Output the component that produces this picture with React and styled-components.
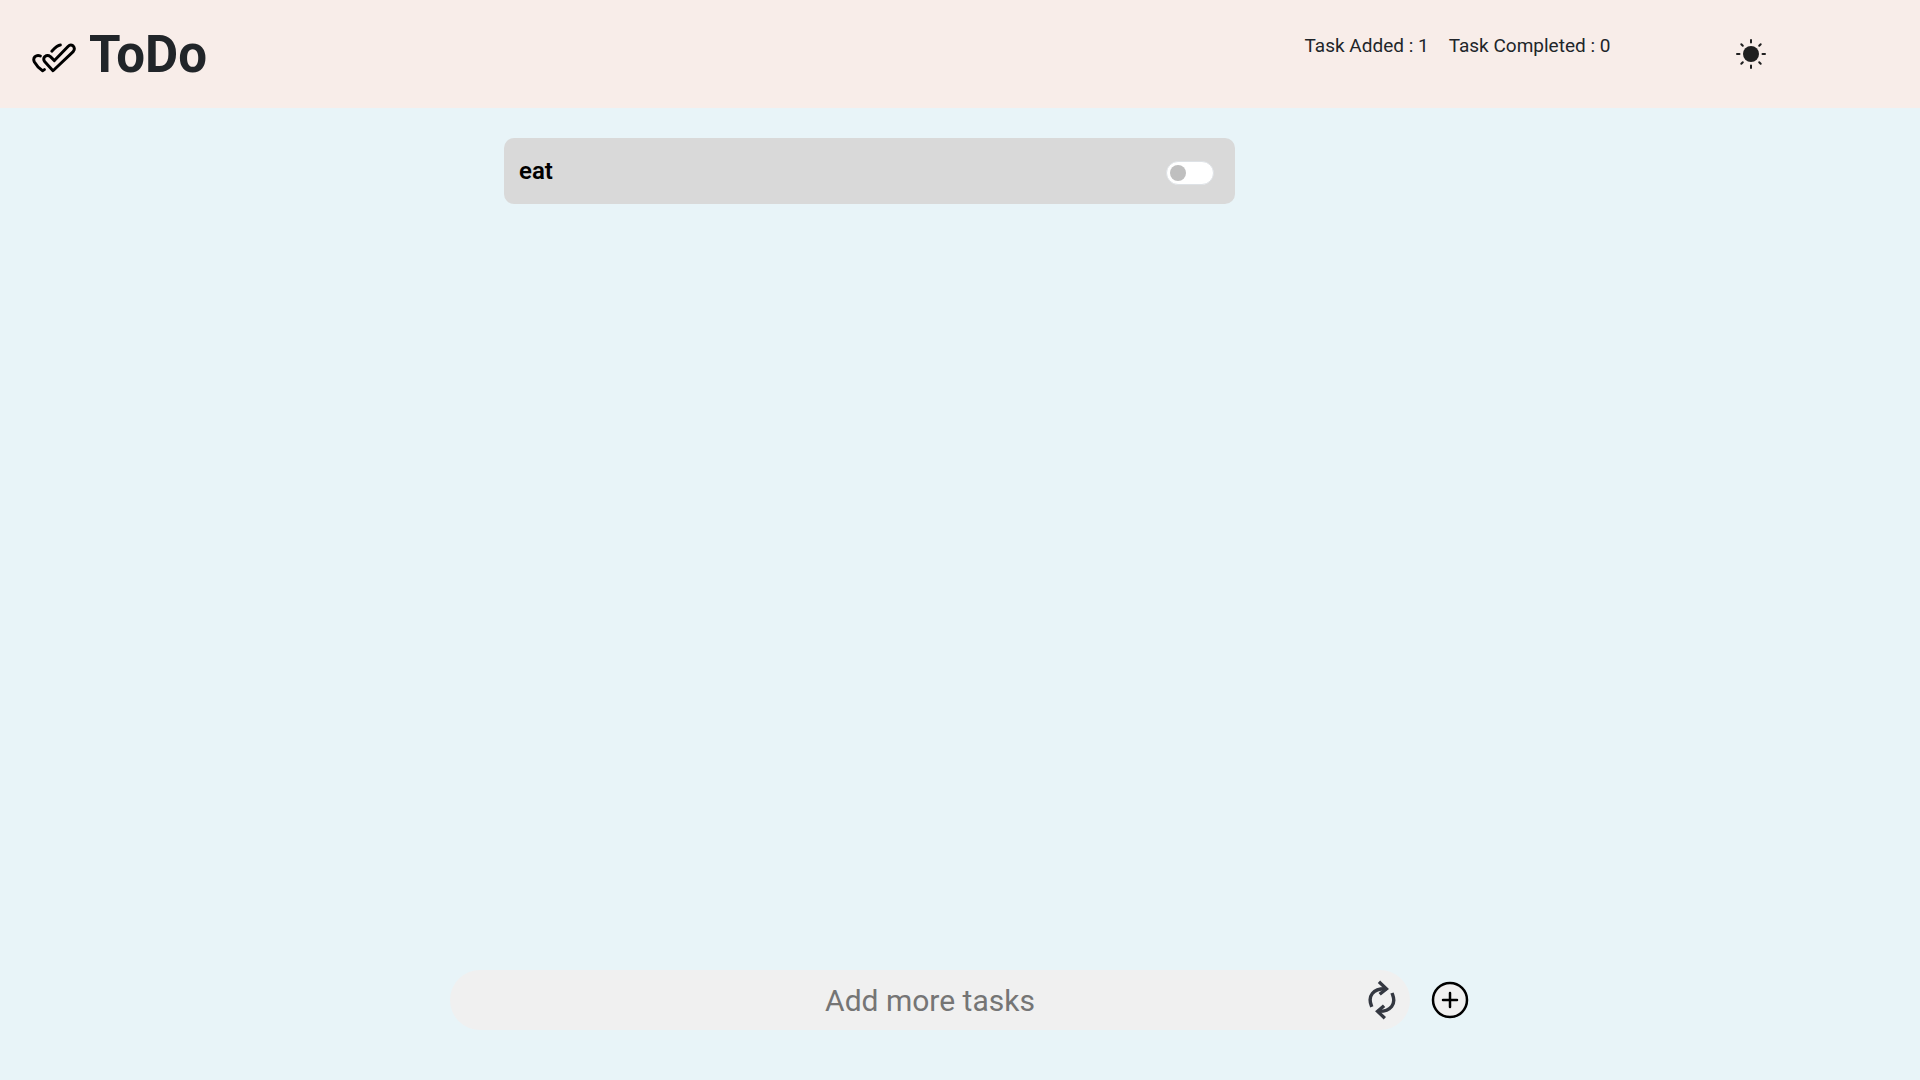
import React, { useState } from "react";
import styled, { createGlobalStyle } from "styled-components";

const GlobalStyle = createGlobalStyle`
  *, *::before, *::after { box-sizing: border-box; }
  body {
    margin: 0;
    background: #e8f4f8;
    color: #212529;
    font-family: Roboto, "Liberation Sans", sans-serif;
  }
`;

const Page = styled.div`
  display: flex;
  flex-direction: column;
  min-height: 100vh;
`;

const Header = styled.header`
  display: flex;
  align-items: center;
  height: 108px;
  padding: 0 8% 0 32px;
  background: #f8ede9;
`;

const Brand = styled.div`
  display: flex;
  align-items: center;
  gap: 13px;
  margin-right: auto;
`;

const Logo = styled.svg`
  width: 44px;
  height: 30px;
  margin-top: 8px;
`;

const Title = styled.h1`
  margin: 0;
  padding-top: 2px;
  font-size: 51px;
  font-weight: 700;
  line-height: 60px;
`;

const Counters = styled.div`
  display: flex;
  gap: 20px;
  height: 60px;
  margin-right: 126px;
`;

const Counter = styled.p`
  margin: 8px 0 0;
  font-size: 19px;
  line-height: 28px;
`;

const IconButton = styled.button`
  display: grid;
  place-items: center;
  width: ${(p) => p.$width}px;
  height: 40px;
  padding: 0;
  border: 0;
  background: none;
  cursor: pointer;
`;

const TaskList = styled.ul`
  flex: 1;
  margin: 0;
  padding: 30px 0 0 26.25%;
  list-style: none;
`;

const TaskItem = styled.li`
  display: flex;
  align-items: center;
  justify-content: space-between;
  width: 51.6%;
  height: 66px;
  padding: 0 21px 0 15px;
  border-radius: 10px;
  background: #d9d9d9;
`;

const TaskLabel = styled.label`
  color: #000;
  font-size: 24px;
  font-weight: 600;
  line-height: 28px;
`;

const Switch = styled.input`
  display: flex;
  align-items: center;
  appearance: none;
  width: 48px;
  height: 24px;
  margin: 4px 0 0;
  padding: 0 3px;
  border: 1px solid #dee2e6;
  border-radius: 12px;
  background: #fff;
  cursor: pointer;

  &::before {
    content: "";
    width: 16px;
    height: 16px;
    border-radius: 50%;
    background: #bfbfbf;
  }

  &:checked {
    justify-content: flex-end;
  }
`;

const Composer = styled.form`
  display: flex;
  align-items: center;
  justify-content: center;
  gap: 20px;
  padding-bottom: 50px;
`;

const Field = styled.div`
  position: relative;
  width: 50%;
`;

const TaskInput = styled.input`
  display: block;
  width: 100%;
  height: 60px;
  padding: 0 60px;
  border: 0;
  border-radius: 30px;
  background: #f0f0f0;
  color: #212529;
  font-family: inherit;
  font-size: 30px;
  text-align: center;

  &::placeholder {
    color: #757575;
    opacity: 1;
  }
`;

const FieldAction = styled.div`
  position: absolute;
  top: 10px;
  right: 8px;
`;

function DoubleCheckLogo() {
  return (
    <Logo viewBox="0 0 44 30" fill="none" stroke="#000" strokeWidth="2.9" strokeLinecap="round" strokeLinejoin="round" aria-hidden="true">
      <path d="M21 27.8 L12.6 18.6 Q10.8 15.6 12.8 13.6 Q15.6 11.4 18.4 13.6 L22.4 17.6 L36 3.4 Q38.4 1 41 2.8 Q43.6 5.6 41.2 8.6 Z" />
      <path d="M8.4 13 Q5.4 11.6 3 13.6 Q.8 15.8 2.4 19 Q5.6 24.6 10.6 27.8 L12.4 26.6" />
      <path d="M19.8 8.2 Q25.2 2.2 28.4 2" />
    </Logo>
  );
}

function SunIcon() {
  return (
    <svg width="30" height="30" viewBox="0 0 30 30" fill="#1f1f1f" stroke="#1f1f1f" strokeWidth="2" strokeLinecap="round" aria-hidden="true">
      <circle cx="15" cy="15" r="8" stroke="none" />
      <path d="M15 1v2.5M15 26.5V29M1 15h2.5M26.5 15H29M5.3 5.3l1.5 1.5M23.2 23.2l1.5 1.5M5.3 24.7l1.5-1.5M23.2 6.8l1.5-1.5" />
    </svg>
  );
}

function RefreshIcon() {
  return (
    <svg width="28" height="40" viewBox="0 0 28 40" fill="none" stroke="#343841" strokeWidth="3.4" strokeLinecap="square" aria-hidden="true">
      <path d="M3.2 25.2C-.2 16 5 8.8 17 8.8" />
      <path d="M12.2 3l6.2 5.8-5.4 4.4" />
      <path d="M24.6 14.6C28.2 24 23 31.4 11 31.4" />
      <path d="M15.6 37l-6-5.6 5.2-4.6" />
    </svg>
  );
}

function PlusIcon() {
  return (
    <svg width="40" height="40" viewBox="0 0 40 40" fill="none" stroke="#000" strokeLinecap="round" aria-hidden="true">
      <circle cx="20" cy="20" r="17" fill="#f0f0f0" strokeWidth="2.5" />
      <path d="M20 13v14M13 20h14" strokeWidth="2.5" />
    </svg>
  );
}

export default function App() {
  const [tasks, setTasks] = useState([{ id: 1, text: "eat", done: false }]);
  const [draft, setDraft] = useState("");

  const toggle = (id) =>
    setTasks(tasks.map((t) => (t.id === id ? { ...t, done: !t.done } : t)));

  const addTask = (event) => {
    event.preventDefault();
    if (!draft.trim()) return;
    setTasks([...tasks, { id: Date.now(), text: draft.trim(), done: false }]);
    setDraft("");
  };

  return (
    <Page>
      <GlobalStyle />
      <Header>
        <Brand>
          <DoubleCheckLogo />
          <Title>ToDo</Title>
        </Brand>
        <Counters>
          <Counter>Task Added : {tasks.length}</Counter>
          <Counter>Task Completed : {tasks.filter((t) => t.done).length}</Counter>
        </Counters>
        <IconButton type="button" aria-label="Toggle theme" $width={30}>
          <SunIcon />
        </IconButton>
      </Header>
      <TaskList>
        {tasks.map((t) => (
          <TaskItem key={t.id}>
            <TaskLabel htmlFor={`task-${t.id}`}>{t.text}</TaskLabel>
            <Switch id={`task-${t.id}`} type="checkbox" checked={t.done} onChange={() => toggle(t.id)} />
          </TaskItem>
        ))}
      </TaskList>
      <Composer onSubmit={addTask}>
        <Field>
          <TaskInput
            type="text"
            aria-label="Add more tasks"
            placeholder="Add more tasks"
            value={draft}
            onChange={(e) => setDraft(e.target.value)}
          />
          <FieldAction>
            <IconButton type="button" aria-label="Clear" $width={40} onClick={() => setDraft("")}>
              <RefreshIcon />
            </IconButton>
          </FieldAction>
        </Field>
        <IconButton type="submit" aria-label="Add task" $width={40}>
          <PlusIcon />
        </IconButton>
      </Composer>
    </Page>
  );
}
